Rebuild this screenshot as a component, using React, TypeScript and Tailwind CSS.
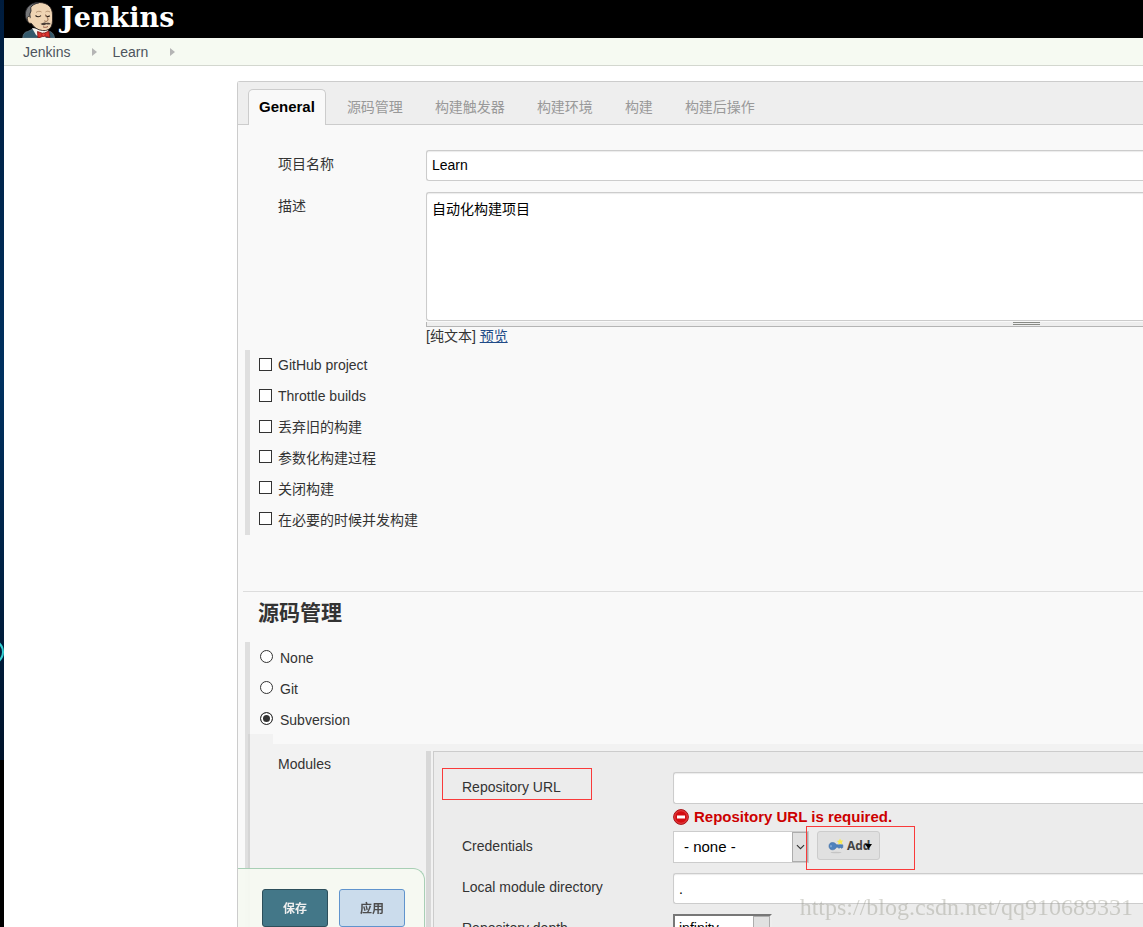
import type { ReactNode } from "react";

const tabs = ["源码管理", "构建触发器", "构建环境", "构建", "构建后操作"];

const options = [
  { id: "github", label: "GitHub project" },
  { id: "throttle", label: "Throttle builds" },
  { id: "discard", label: "丢弃旧的构建" },
  { id: "params", label: "参数化构建过程" },
  { id: "disable", label: "关闭构建" },
  { id: "concurrent", label: "在必要的时候并发构建" },
];

const scms = ["None", "Git", "Subversion"];

const inputClass =
  "block w-full rounded-l-[3px] border border-r-0 border-[#ccc] bg-white px-[5px] text-sm text-black shadow-[inset_0_1px_1px_rgba(0,0,0,0.08)] outline-none";

function JenkinsLogo() {
  return (
    <svg viewBox="0 0 34 38" className="h-[38px] w-[34px] flex-none" aria-hidden>
      {/* coat and shirt */}
      <path d="M.8 38c.2-3.500 1.500-6 5-6.500L11 29l15 2c4 .5 6 3 6.500 7z" fill="#33596b" stroke="#5c6f78" strokeWidth=".8" />
      <path d="M10 28l4 7 5 3h4l4-3-1-5z" fill="#f7f3ee" />
      {/* head */}
      <path d="M6 21C4 10 8 2.500 17 2.500c9 0 13.500 5 13.500 12.500 0 4 .3 8-1 11-1.500 3.500-5 5-9 4.500-5-.5-8.500-3-11-7z" fill="#efd4b3" stroke="#2a2320" strokeWidth=".9" />
      <path d="M4.500 20C2.500 15 3 9.500 7 6c3-2.700 7-3.700 10-3.300-4 1-7 2.300-8.300 5L9 11l-1.200 3 .4 3.500L7 19.500l-.5 2.500z" fill="#77787a" stroke="#26262a" strokeWidth=".9" />
      <path d="M7.500 16.500c-2-.5-2.500 1.500-2 3.500.5 2.200 2 4 3.500 3.500" fill="#efd4b3" stroke="#2a2320" strokeWidth=".8" />
      {/* brows and eyes */}
      <path d="M14 12.500c1.500-1.500 4-1.500 5.500-.5M23.500 12c1.300-1 3-1 4.500 0" fill="none" stroke="#a58465" strokeWidth=".8" />
      <path d="M13.500 15.500c1.500 1.500 4 1.500 5.500.2M23.500 15.700c1.200 1 3 1 4.300 0" fill="none" stroke="#2b211c" strokeWidth="1.100" />
      {/* nose, moustache, mouth */}
      <path d="M23.500 14.500c.8 2.500 3.500 4 2.300 6-.8 1.200-2.500 1-3.600.3" fill="none" stroke="#8a6247" strokeWidth=".9" />
      <path d="M18.500 23.800c1.700-.2 3-1.600 4.500-1.300l1.200.6c1.500-.7 3.600-.3 4.600.9-1.600.7-3 .8-4.600.2-1.700 1.300-4.300 1.400-5.700-.4z" fill="#4a3d36" />
      <path d="M21 26.800c1.500.8 3.500.7 5-.3" fill="none" stroke="#8b4a37" strokeWidth=".9" />
      {/* bow tie */}
      <path d="M15.500 31.500l5 1.800 1.800-.2 4.600-2 1 6.300-5.400-1.200-1.800.3-4.700 1.500z" fill="#d8312c" stroke="#7d1714" strokeWidth=".8" />
      <circle cx="21.500" cy="34.700" r="1.700" fill="#ef4340" stroke="#7d1714" strokeWidth=".6" />
    </svg>
  );
}

function KeyIcon() {
  return (
    <svg viewBox="0 0 16 16" className="h-4 w-4 flex-none" aria-hidden>
      <ellipse cx="8" cy="14.500" rx="5.500" ry=".8" fill="#c4c4c4" />
      <path d="M4.500 4.500c2 0 3.300 1 3.800 2.300h6.500v2.700l-1.300.8-1.200-.9-1.300.9-1.300-1H8.300c-.6 1.600-2 2.500-3.800 2.500C2.300 11.800 1 10.200 1 8.100s1.300-3.600 3.500-3.600z" fill="#4f83bd" stroke="#3d6ba3" strokeWidth=".6" />
      <path d="M3 7.200v2" stroke="#a9c5e4" />
      <path d="M12 .5l1 2 2.300.1-1.500 1.600.7 2.200-2.300-.9-2 1.100.3-2.300L8.800 3l2.300-.5z" fill="#f8ea4e" />
    </svg>
  );
}

function ErrorIcon() {
  return (
    <svg viewBox="0 0 16 16" className="h-4 w-4 flex-none" aria-hidden>
      <circle cx="8" cy="8" r="7.400" fill="#d40d12" stroke="#a8161a" />
      <circle cx="8" cy="8" r="6.300" fill="none" stroke="#ef6b6b" strokeWidth=".6" />
      <rect x="4" y="6.500" width="8" height="3" fill="#fff" />
    </svg>
  );
}

function Crumb({ children }: { children: ReactNode }) {
  return (
    <li className="flex items-center">
      <a href="#" className="text-[#4d545d]">{children}</a>
      <svg viewBox="0 0 5 8" className="ml-[22px] mr-[15px] h-2 w-[5px]" aria-hidden>
        <path d="M0 0l5 4-5 4z" fill="#b5b5b5" />
      </svg>
    </li>
  );
}

export default function App() {
  return (
    <div className="relative flex h-screen overflow-hidden bg-white font-['Liberation_Sans','Noto_Sans_CJK_SC',sans-serif] text-sm leading-5 text-[#333]">
      {/* desktop edge */}
      <div className="relative w-1 flex-none overflow-hidden bg-black">
        <div className="h-[760px] bg-linear-to-b from-[#001c3d] via-[#003160] to-[#00132b]" />
        <div className="absolute -left-[22px] top-[639px] h-[26px] w-[26px] rounded-full border-2 border-[#35d0d4]" />
      </div>

      <div className="min-w-0 flex-1">
        <header className="flex h-[38px] items-start overflow-hidden bg-black pl-[18px]">
          <a href="#" className="flex items-start text-white">
            <JenkinsLogo />
            <span className="pl-[5px] font-['DejaVu_Serif',serif] text-[27px] font-bold leading-9">Jenkins</span>
          </a>
        </header>

        <nav className="border-b border-[#d3d7cf] bg-[#f6faf2]">
          <ul className="flex h-[27px] items-center pl-[19px]">
            <Crumb>Jenkins</Crumb>
            <Crumb>Learn</Crumb>
          </ul>
        </nav>

        <main className="ml-[233px] mt-[15px] min-h-screen rounded-tl-[3px] border-l border-t border-[#ccc] bg-[#f9f9f9]">
          {/* tabs */}
          <div className="flex h-[43px] items-end border-b border-[#ccc] bg-[#eee] pl-[10px]">
            <button className="-mb-px h-9 rounded-t-[5px] border border-b-0 border-[#ccc] bg-[#f9f9f9] px-[10px] pb-[2px] text-[15px] font-bold text-black">
              General
            </button>
            <div className="flex h-9 items-center gap-8 pl-[21px] pt-[2px]">
              {tabs.map((t) => (
                <button key={t} className="text-[#999]">{t}</button>
              ))}
            </div>
          </div>

          {/* general */}
          <section className="pt-[25px]">
            <div className="grid grid-cols-[148px_1fr] pl-10">
              <label htmlFor="name" className="pt-1">项目名称</label>
              <input id="name" defaultValue="Learn" className={`${inputClass} h-[31px] pb-[2px]`} />
            </div>
            <div className="mt-[11px] grid grid-cols-[148px_1fr] pl-10">
              <label htmlFor="description" className="pt-1">描述</label>
              <div>
                <textarea
                  id="description"
                  defaultValue="自动化构建项目"
                  className={`${inputClass} h-[129px] resize-none pt-[6px]`}
                />
                <div className="h-[5px] border-b border-l border-[#b5b5b5] bg-[#eee] pl-[586px]">
                  <div className="mt-px h-[3px] w-[27px] border-y border-[#888a85]" />
                </div>
                <p className="-mt-px leading-5">
                  [纯文本] <a href="#" className="text-[#204a87] underline">预览</a>
                </p>
              </div>
            </div>

            <div className="ml-[7px] mt-1 grid h-[185px] grid-rows-6 border-l-[5px] border-[#dfdfdf] pl-[9px]">
              {options.map((o) => (
                <div key={o.id} className="flex items-center gap-[6px]">
                  <input
                    type="checkbox"
                    id={o.id}
                    className="mb-[2px] h-[13px] w-[13px] appearance-none border border-[#333] bg-white checked:bg-[#333]"
                  />
                  <label htmlFor={o.id}>{o.label}</label>
                </div>
              ))}
            </div>
          </section>

          {/* source code management */}
          <section className="ml-[5px] mt-[56px] border-t border-[#ddd]">
            <h2 className="pl-[15px] pt-[5px] text-[21px] font-bold leading-8">源码管理</h2>
            <div className="ml-[2px] mt-[13px] min-h-[400px] border-l-[5px] border-[#dfdfdf]">
              {scms.map((s) => (
                <div key={s} className="flex h-[31px] items-center gap-[7px] pl-[10px]">
                  <input
                    type="radio"
                    name="scm"
                    id={s}
                    defaultChecked={s === "Subversion"}
                    className="mb-[2px] h-[13px] w-[13px] appearance-none rounded-full border border-[#333] bg-white checked:bg-[#333] checked:shadow-[inset_0_0_0_2px_white]"
                  />
                  <label htmlFor={s} className="pt-px">{s}</label>
                </div>
              ))}

              <div className="-ml-[2px] -mt-px border-l-2 border-[#d5d5d5]">
                <div className="h-[10px] w-[23px] bg-[#f2f2f2]" />
                <div className="grid grid-cols-[148px_1fr] bg-[#f2f2f2] pl-7 pt-[7px]">
                  <div className="pt-[3px]">Modules</div>
                  <div className="border-l-[5px] border-[#d8d8d8] pl-[2px]">
                    <div className="border-l border-t border-[#ccc] bg-[#ececec] pb-16 pl-7 pt-5">
                      <div className="grid grid-cols-[211px_1fr]">
                        <div className="relative pt-[5px]">
                          <label htmlFor="url">Repository URL</label>
                          <div className="pointer-events-none absolute -left-5 -top-1 h-8 w-[150px] border border-[#f93a3a]" />
                        </div>
                        <div>
                          <input id="url" className={`${inputClass} h-8`} />
                          <p className="flex h-[27px] items-center gap-[5px] pb-px text-[15px] font-bold text-[#c00]">
                            <ErrorIcon />
                            Repository URL is required.
                          </p>
                        </div>
                      </div>

                      <div className="grid grid-cols-[211px_1fr]">
                        <label htmlFor="credentials" className="pt-[5px]">Credentials</label>
                        <div className="relative flex items-start gap-2">
                          <div className="relative">
                            <select
                              id="credentials"
                              className="block h-8 w-[136px] appearance-none border border-[#ccc] bg-white pl-[10px] text-[15px] text-black"
                            >
                              <option>- none -</option>
                            </select>
                            <span className="pointer-events-none absolute right-px top-px flex h-[30px] w-4 items-center justify-center border border-[#adadad] bg-[#e1e1e1]">
                              <svg viewBox="0 0 10 6" className="h-[6px] w-[9px]" aria-hidden>
                                <path d="M1 .8l4 4 4-4" fill="none" stroke="#333" strokeWidth="1.200" />
                              </svg>
                            </span>
                          </div>
                          <button className="flex h-[29px] w-[63px] items-center rounded-[3px] border border-[#ccc] bg-[#e0e0e0] pl-[10px] font-['Open_Sans',sans-serif] text-xs font-bold text-[#444]">
                            <KeyIcon />
                            <span className="pl-[3px]">Add</span>
                            <svg viewBox="0 0 7 6" className="-ml-[5px] h-[6px] w-[7px] flex-none" aria-hidden>
                              <path d="M0 1h7L3.500 6z" fill="#000" />
                            </svg>
                          </button>
                          <div className="pointer-events-none absolute -top-[5px] left-[133px] h-11 w-[109px] border border-[#f93a3a]" />
                        </div>
                      </div>

                      <div className="mt-[10px] grid grid-cols-[211px_1fr]">
                        <label htmlFor="local" className="pt-1">Local module directory</label>
                        <input id="local" defaultValue="." className={`${inputClass} h-[31px]`} />
                      </div>

                      <div className="mt-[10px] grid grid-cols-[211px_1fr]">
                        <label htmlFor="depth" className="pt-1">Repository depth</label>
                        <div className="relative w-[99px]">
                          <select
                            id="depth"
                            className="block h-7 w-full appearance-none border-2 border-b-[#eee] border-l-[#777] border-r-[#eee] border-t-[#777] bg-white pl-1 text-sm text-black"
                          >
                            <option>infinity</option>
                          </select>
                          <span className="pointer-events-none absolute right-[2px] top-[2px] h-6 w-[17px] border border-[#adadad] bg-[#e1e1e1]" />
                        </div>
                      </div>
                    </div>
                  </div>
                </div>
              </div>
            </div>
          </section>
        </main>
      </div>

      {/* sticky save bar */}
      <div className="fixed bottom-0 left-[238px] flex h-[59px] w-[187px] gap-[11px] rounded-tr-xl border-r border-t border-[#a8cfb5] bg-[#f5f9f1]/95 pl-6 pt-5">
        <button className="h-[38px] w-[66px] rounded-[3px] border border-[#2d4f5b] bg-[#437788] pt-[2px] text-xs font-bold text-[#eee]">
          保存
        </button>
        <button className="h-[38px] w-[66px] rounded-[3px] border border-[#6094cd] bg-[#cbdcec] pt-[2px] text-xs font-bold text-[#4d4d4d]">
          应用
        </button>
      </div>

      <div className="pointer-events-none fixed bottom-[8px] right-[10px] font-['Liberation_Serif',serif] text-2xl leading-6 text-[#8a8a7a]/35">
        https://blog.csdn.net/qq910689331
      </div>
    </div>
  );
}
